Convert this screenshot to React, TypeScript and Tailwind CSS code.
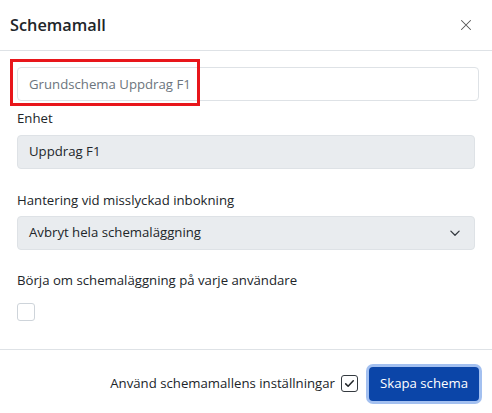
import React from 'react';

const Chevron = () => (
  <svg width="12" height="12" viewBox="0 0 16 16" fill="none" stroke="#343a40" strokeWidth="1.7" strokeLinecap="round" strokeLinejoin="round">
    <path d="M2.5 5.5l5.5 5.5 5.5-5.5" />
  </svg>
);

const App: React.FC = () => {
  return (
    <div className="w-[492px] h-[413px] overflow-hidden bg-white text-[#212529] [font-family:'Open_Sans','Noto_Sans',sans-serif]">
      <div className="h-[51px] flex items-center justify-between pl-[10px] pr-[16px] border-b border-[#dee2e6]">
        <h1 className="text-[16.3px] font-semibold leading-none">Schemamall</h1>
        <button className="w-[20px] h-[20px] flex items-center justify-center text-[#555]">
          <svg width="12" height="12" viewBox="0 0 16 16" stroke="currentColor" strokeWidth="1.4" strokeLinecap="round">
            <path d="M2 2l12 12M14 2L2 14" />
          </svg>
        </button>
      </div>

      <div className="px-[17px] pt-[16px] pb-[28px] text-[13.2px]">
        <div className="relative">
          <input
            className="w-[462px] h-[34px] px-[11px] rounded-[4px] border border-[#dee2e6] text-[13.2px] placeholder:text-[#6c757d] outline-none"
            placeholder="Grundschema Uppdrag F1"
          />
          <div className="absolute left-[-7px] top-[-8px] w-[190px] h-[47px] border-[3px] border-[#e8161b] pointer-events-none" />
        </div>

        <label className="block mt-[7px] mb-[6px] leading-[21px]">Enhet</label>
        <div className="h-[34px] px-[11px] flex items-center rounded-[4px] border border-[#dee2e6] bg-[#e9ecef]">
          Uppdrag F1
        </div>

        <label className="block mt-[21px] mb-[5px] leading-[21px]">Hantering vid misslyckad inbokning</label>
        <div className="h-[34px] pl-[11px] pr-[13px] flex items-center justify-between rounded-[4px] border border-[#dee2e6] bg-[#e9ecef]">
          <span>Avbryt hela schemaläggning</span>
          <Chevron />
        </div>

        <label className="block mt-[20px] mb-[12px] leading-[21px]">Börja om schemaläggning på varje användare</label>
        <div className="w-[18px] h-[18px] rounded-[3px] border border-[#ced4da] bg-white" />
      </div>

      <div className="border-t border-[#dee2e6] flex items-center justify-end gap-[11px] pl-[16px] pr-[13px] pt-[17px] text-[13.2px]">
        <div className="flex items-center gap-[6px]">
          <span>Använd schemamallens inställningar</span>
          <div className="w-[17px] h-[17px] rounded-[3px] border border-[#343a40] flex items-center justify-center">
            <svg width="11" height="11" viewBox="0 0 16 16" fill="none" stroke="#212529" strokeWidth="2.2" strokeLinecap="round" strokeLinejoin="round">
              <path d="M2.5 8.5l3.5 3.5 7.5-8" />
            </svg>
          </div>
        </div>
        <button className="h-[34px] w-[110px] rounded-[4px] bg-[#0b45a8] text-white ring-[3px] ring-[#a3c0f0]">
          Skapa schema
        </button>
      </div>
    </div>
  );
};

export default App;
